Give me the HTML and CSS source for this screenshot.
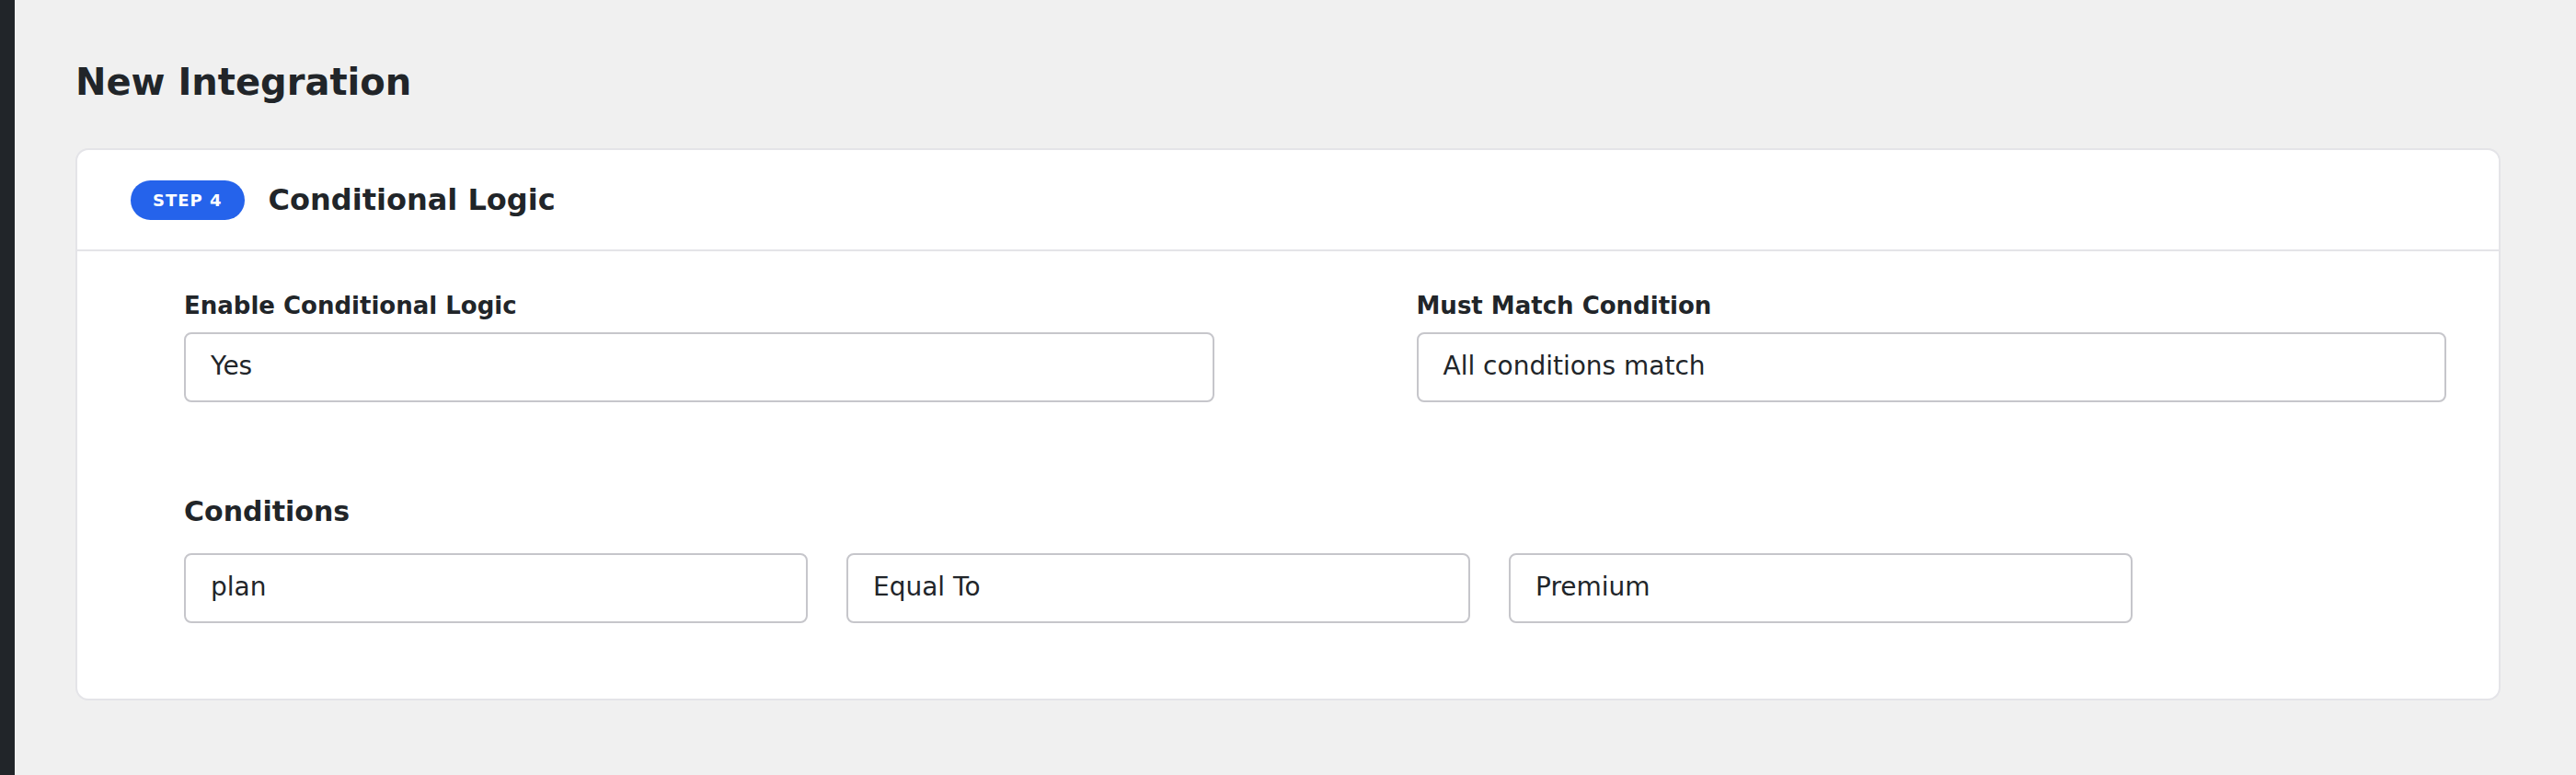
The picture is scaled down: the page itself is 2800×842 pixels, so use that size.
FILE: index.html
```html
<!DOCTYPE html>
<html lang="en">
<head>
<meta charset="utf-8">
<title>New Integration</title>
<link rel="stylesheet" href="styles.css">
</head>
<body>
<div class="app">
  <aside class="sidebar"></aside>
  <main class="main">
    <h1 class="page-title">New Integration</h1>
    <section class="card">
      <header class="card-header">
        <span class="step-badge">STEP 4</span>
        <h2 class="card-title">Conditional Logic</h2>
      </header>
      <div class="card-body">
        <div class="form-grid">
          <div class="field">
            <label class="field-label">Enable Conditional Logic</label>
            <div class="field-input">Yes</div>
          </div>
          <div class="field">
            <label class="field-label">Must Match Condition</label>
            <div class="field-input">All conditions match</div>
          </div>
        </div>
        <h3 class="section-title">Conditions</h3>
        <div class="condition-row">
          <div class="field-input">plan</div>
          <div class="field-input">Equal To</div>
          <div class="field-input">Premium</div>
        </div>
      </div>
    </section>
  </main>
</div>
</body>
</html>
```

FILE: styles.css
```css
* {
  box-sizing: border-box;
}

html, body {
  margin: 0;
  padding: 0;
}

body {
  background: #f0f0f0;
  color: #212529;
  font-family: "DejaVu Sans", "Noto Sans", sans-serif;
}

.app {
  display: flex;
  min-height: 100vh;
}

.sidebar {
  flex: 0 0 16px;
  background: #212529;
}

.main {
  flex: 1 1 auto;
  padding: 66px 82px 0 66px;
}

.page-title {
  margin: 0 0 48px;
  font-size: 40px;
  line-height: 47px;
  font-weight: bold;
  color: #212529;
}

.card {
  background: #ffffff;
  border: 2px solid #e4e4e8;
  border-radius: 14px;
}

.card-header {
  display: flex;
  align-items: center;
  gap: 26px;
  padding: 33px 0 32px 58px;
  border-bottom: 2px solid #e4e4e8;
}

.step-badge {
  display: inline-flex;
  align-items: center;
  justify-content: center;
  height: 43px;
  padding: 0 24px;
  border-radius: 22px;
  background: #2563eb;
  color: #ffffff;
  font-size: 18px;
  font-weight: bold;
  letter-spacing: 1px;
}

.card-title {
  margin: 0;
  font-size: 32px;
  line-height: 37px;
  font-weight: bold;
}

.card-body {
  padding: 44px 57px 82px 116px;
}

.form-grid {
  display: grid;
  grid-template-columns: 1fr 1fr;
  column-gap: 220px;
}

.field {
  display: flex;
  flex-direction: column;
}

.field-label {
  display: block;
  margin-bottom: 14px;
  font-size: 26px;
  line-height: 30px;
  font-weight: bold;
}

.field-input {
  display: flex;
  align-items: center;
  height: 76px;
  padding: 0 27px 4px;
  border: 2px solid #c6c6cb;
  border-radius: 8px;
  background: #ffffff;
  font-size: 28px;
  color: #212529;
  white-space: nowrap;
}

.section-title {
  margin: 101px 0 28px;
  font-size: 30px;
  line-height: 35px;
  font-weight: bold;
}

.condition-row {
  display: grid;
  grid-template-columns: repeat(3, 678px);
  column-gap: 42px;
}
```
